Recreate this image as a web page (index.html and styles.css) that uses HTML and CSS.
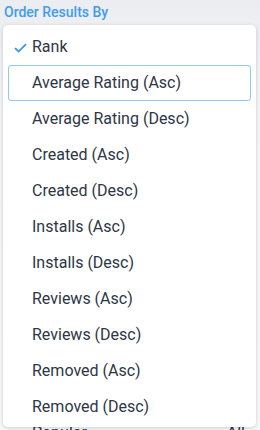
FILE: index.html
```html
<!DOCTYPE html>
<html lang="en">
<head>
	<meta charset="UTF-8">
	<title>Order Results By</title>
	<link rel="stylesheet" href="styles.css">
</head>
<body>
	<div class="field">
		<div class="fieldLabel">Order Results By</div>

		<!-- Dropdown -->
		<ul class="menu">
			<li class="item selected">
				<svg class="check" width="13" height="10" viewBox="0 0 13 10"><path d="M1 5.2 L4.6 8.6 L12 1.2" fill="none" stroke="#3b95e6" stroke-width="1.8"/></svg>
				Rank
			</li>
			<li class="item focused">Average Rating (Asc)</li>
			<li class="item">Average Rating (Desc)</li>
			<li class="item">Created (Asc)</li>
			<li class="item">Created (Desc)</li>
			<li class="item">Installs (Asc)</li>
			<li class="item">Installs (Desc)</li>
			<li class="item">Reviews (Asc)</li>
			<li class="item">Reviews (Desc)</li>
			<li class="item">Removed (Asc)</li>
			<li class="item">Removed (Desc)</li>
		</ul>

		<!-- content under the menu -->
		<div class="behind">
			<span>Popular</span>
			<span>All</span>
		</div>
	</div>
</body>
</html>
```

FILE: styles.css
```css
html, body {
	height: 430px;
	overflow: hidden;
}
body {
	margin: 0;
	background: linear-gradient(#ebedf0, #f5f6f8 25%, #f8f9fa);
	font-family: Roboto, "Noto Sans", sans-serif;
	color: #2d3646;
}

.field {
	padding: 2px 3px 0 3px;
}
.fieldLabel {
	color: #3f9cf0;
	font-size: 14px;
	font-weight: 500;
	line-height: 20px;
	padding-left: 1px;
}

.menu {
	position: relative;
	z-index: 1;
	list-style: none;
	margin: 3px 1px 0 0;
	padding: 4px 5px 2px 5px;
	background: #fff;
	border-radius: 5px;
	box-shadow: 0 1px 4px rgba(0,0,0,0.18);
}
.item {
	position: relative;
	height: 36px;
	line-height: 34px;
	padding-left: 23px;
	font-size: 16px;
	border: 1px solid transparent;
	border-radius: 3px;
	box-sizing: border-box;
}
.item.focused {
	border-color: #90c8f8;
}
.check {
	position: absolute;
	left: 5px;
	top: 13px;
}

.behind {
	display: flex;
	justify-content: space-between;
	margin-top: -4px;
	padding: 0 12px 0 29px;
	font-size: 16px;
	line-height: 20px;
}
```
